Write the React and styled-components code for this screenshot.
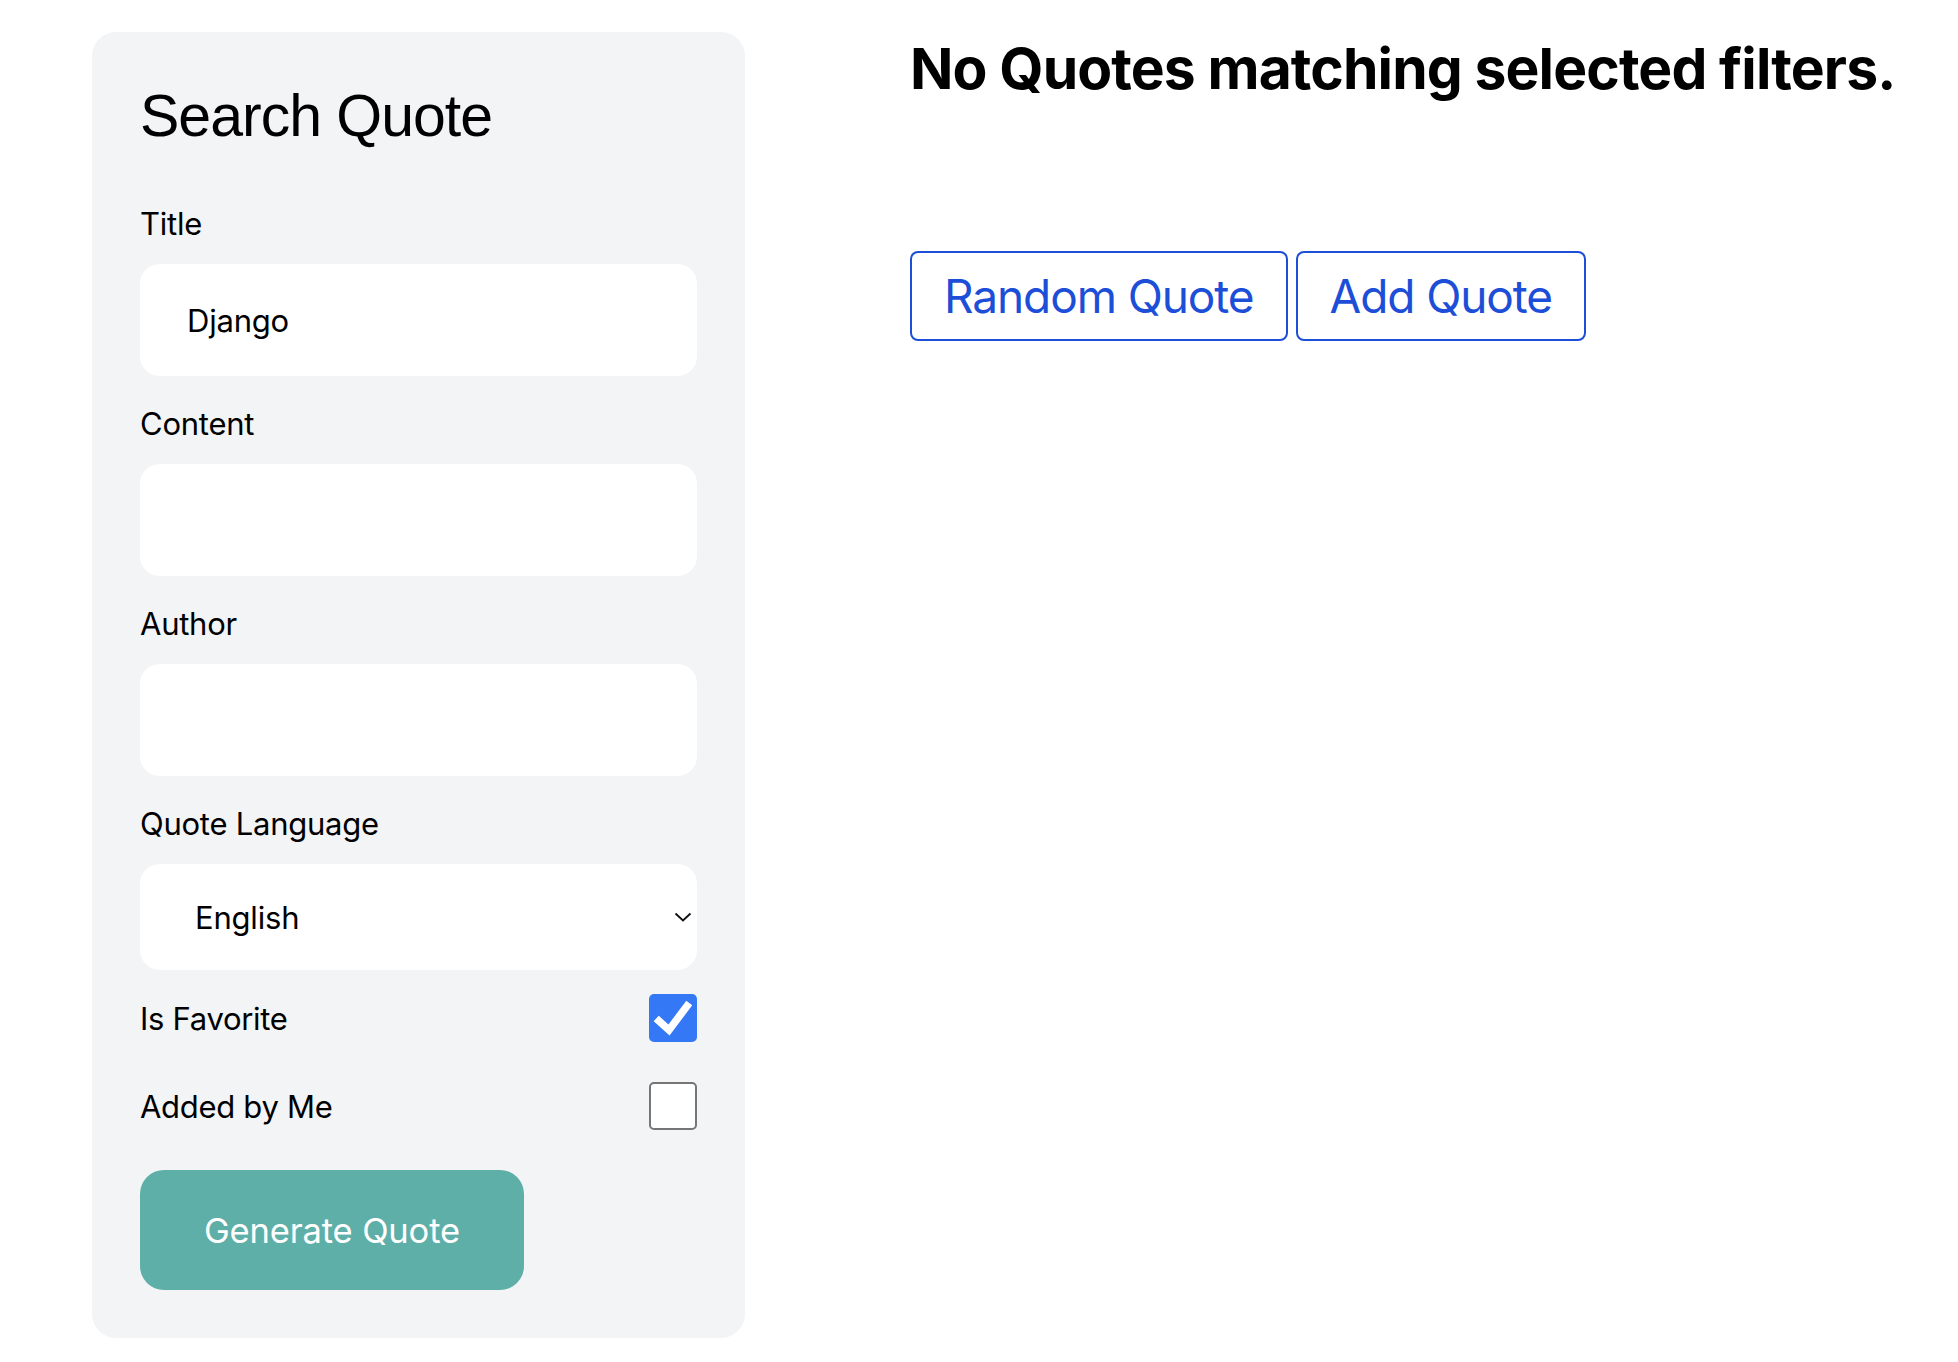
import React, { useState } from "react";
import styled, { createGlobalStyle } from "styled-components";

const GlobalStyle = createGlobalStyle`
  html, body { margin: 0; padding: 0; background: #ffffff; }
  body { font-family: Inter, "Noto Sans", sans-serif; color: #000; }
  *, *::before, *::after { box-sizing: border-box; }
`;

const Page = styled.div`
  display: flex;
  align-items: flex-start;
  gap: 165px;
  padding: 32px 0 0 92px;
  min-height: 1362px;
`;

const Panel = styled.form`
  width: 653px;
  flex: none;
  padding: 48px;
  background: #f3f4f6;
  border-radius: 24px;
  display: flex;
  flex-direction: column;
`;

const PanelTitle = styled.h2`
  margin: 0 0 48px;
  font-family: "Liberation Sans", Arial, sans-serif;
  font-weight: 400;
  font-size: 59px;
  line-height: 72px;
  letter-spacing: -1px;
  color: #000;
`;

const Field = styled.div`
  display: flex;
  flex-direction: column;
  gap: 16px;
  margin-bottom: 24px;
`;

const Label = styled.label`
  font-family: Inter, sans-serif;
  font-size: 31px;
  line-height: 48px;
  letter-spacing: -0.25px;
  color: #000;
`;

const TextInput = styled.input`
  display: block;
  width: 100%;
  height: 112px;
  border: none;
  border-radius: 20px;
  background: #fff;
  padding: 0 47px;
  font-family: Inter, sans-serif;
  font-size: 31px;
  letter-spacing: -0.2px;
  color: #000;
  outline: none;
`;

const SelectWrap = styled.div`
  position: relative;
`;

const Select = styled.select`
  appearance: none;
  -webkit-appearance: none;
  display: block;
  width: 100%;
  height: 106px;
  border: none;
  border-radius: 20px;
  background: #fff;
  padding: 0 55px;
  font-family: Inter, sans-serif;
  font-size: 31px;
  letter-spacing: -0.2px;
  color: #000;
  outline: none;
`;

const Chevron = styled.svg`
  position: absolute;
  right: 5px;
  top: 50%;
  transform: translateY(-50%);
  width: 18px;
  height: 11px;
  pointer-events: none;
`;

const CheckRow = styled.label`
  display: flex;
  align-items: center;
  justify-content: space-between;
  height: 48px;
  margin-bottom: 40px;
  font-family: Inter, sans-serif;
  font-size: 31px;
  letter-spacing: -0.3px;
  color: #000;
  cursor: pointer;
`;

const CheckBox = styled.span`
  display: flex;
  align-items: center;
  justify-content: center;
  width: 48px;
  height: 48px;
  border-radius: 5px;
  background: ${(p) => (p.$checked ? "#3478f6" : "#ffffff")};
  border: ${(p) => (p.$checked ? "none" : "2px solid #767676")};
`;

const HiddenInput = styled.input`
  position: absolute;
  opacity: 0;
  width: 0;
  height: 0;
`;

const GenerateButton = styled.button`
  align-self: flex-start;
  height: 120px;
  padding: 0 64px;
  border: none;
  border-radius: 24px;
  background: #5fafa9;
  color: #fff;
  font-family: Inter, sans-serif;
  font-size: 34.5px;
  letter-spacing: -0.15px;
  cursor: pointer;
`;

const Main = styled.section`
  display: flex;
  flex-direction: column;
  align-items: flex-start;
  padding-top: 1px;
`;

const Heading = styled.h1`
  margin: 0 0 146px;
  font-family: Inter, sans-serif;
  font-weight: 700;
  font-size: 57px;
  line-height: 72px;
  letter-spacing: -0.88px;
  white-space: nowrap;
  color: #000;
`;

const ButtonRow = styled.div`
  display: flex;
  gap: 8px;
`;

const OutlineButton = styled.button`
  height: 90px;
  padding: 0 32px;
  border: 2px solid #1d4ed8;
  border-radius: 8px;
  background: #fff;
  color: #1d4ed8;
  font-family: Inter, sans-serif;
  font-size: 46px;
  letter-spacing: -1.1px;
  cursor: pointer;
`;

function Check({ label, checked, onChange }) {
  return (
    <CheckRow>
      <span>{label}</span>
      <HiddenInput type="checkbox" checked={checked} onChange={onChange} />
      <CheckBox $checked={checked}>
        {checked && (
          <svg width="48" height="48" viewBox="0 0 48 48">
            <path
              d="M10 27 L20 36 L38 12"
              fill="none"
              stroke="#fff"
              strokeWidth="7.5"
              strokeLinecap="square"
              strokeLinejoin="miter"
            />
          </svg>
        )}
      </CheckBox>
    </CheckRow>
  );
}

export default function App() {
  const [title, setTitle] = useState("Django");
  const [content, setContent] = useState("");
  const [author, setAuthor] = useState("");
  const [lang, setLang] = useState("en");
  const [fav, setFav] = useState(true);
  const [mine, setMine] = useState(false);

  return (
    <>
      <GlobalStyle />
      <Page>
        <Panel onSubmit={(e) => e.preventDefault()}>
          <PanelTitle>Search Quote</PanelTitle>
          <Field>
            <Label htmlFor="title">Title</Label>
            <TextInput id="title" value={title} onChange={(e) => setTitle(e.target.value)} />
          </Field>
          <Field>
            <Label htmlFor="content">Content</Label>
            <TextInput id="content" value={content} onChange={(e) => setContent(e.target.value)} />
          </Field>
          <Field>
            <Label htmlFor="author">Author</Label>
            <TextInput id="author" value={author} onChange={(e) => setAuthor(e.target.value)} />
          </Field>
          <Field>
            <Label htmlFor="lang">Quote Language</Label>
            <SelectWrap>
              <Select id="lang" value={lang} onChange={(e) => setLang(e.target.value)}>
                <option value="en">English</option>
                <option value="ru">Russian</option>
              </Select>
              <Chevron viewBox="0 0 18 11">
                <path d="M1.5 2 L9 9 L16.5 2" fill="none" stroke="#111" strokeWidth="1.9" />
              </Chevron>
            </SelectWrap>
          </Field>
          <Check label="Is Favorite" checked={fav} onChange={() => setFav(!fav)} />
          <Check label="Added by Me" checked={mine} onChange={() => setMine(!mine)} />
          <GenerateButton type="submit">Generate Quote</GenerateButton>
        </Panel>
        <Main>
          <Heading>No Quotes matching selected filters.</Heading>
          <ButtonRow>
            <OutlineButton type="button">Random Quote</OutlineButton>
            <OutlineButton type="button">Add Quote</OutlineButton>
          </ButtonRow>
        </Main>
      </Page>
    </>
  );
}
